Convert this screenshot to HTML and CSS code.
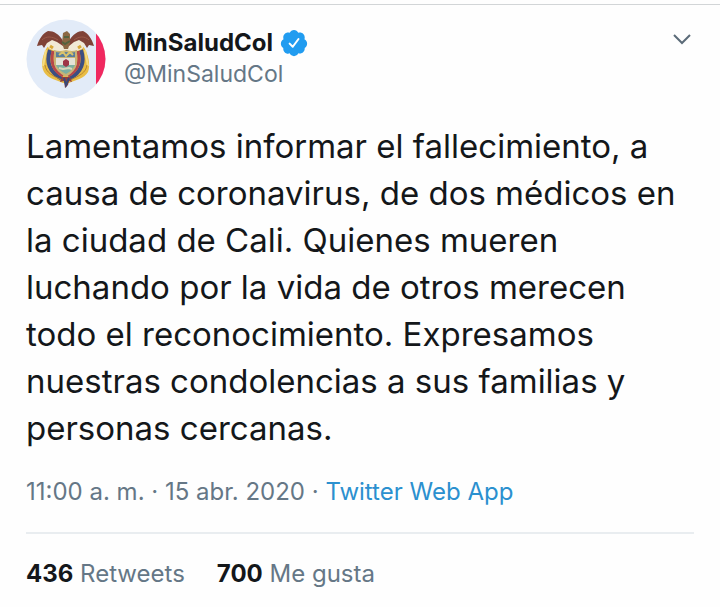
FILE: index.html
```html
<!DOCTYPE html>
<html lang="es">
<head>
    <meta charset="UTF-8">
    <meta name="viewport" content="width=device-width, initial-scale=1.0">
    <title>MinSaludCol en Twitter</title>
    <link rel="stylesheet" href="styles.css">
</head>
<body>
    <article class="tweet">
        <!-- Cabecera -->
        <header class="tweet-header">
            <svg class="avatar" viewBox="0 0 80 80" role="img" aria-label="Escudo de Colombia">
                <defs>
                    <clipPath id="avatar-clip"><circle cx="40" cy="40" r="39.5"/></clipPath>
                </defs>
                <g clip-path="url(#avatar-clip)">
                    <rect width="80" height="80" fill="#e2ebf8"/>
                    <rect x="70" width="10" height="80" fill="#f0285f"/>
                </g>
                <!-- banderas -->
                <path d="M22 27 C17 34 14 46 18 53 C22 60 31 61 37 64 L43 64 C49 61 58 60 62 53 C65 46 62 34 57 27 Z" fill="#e9bd45"/>
                <path d="M20 31 L17 47 M59 31 L62 47" stroke="#f5dc83" stroke-width="2"/>
                <path d="M24 31 C20 43 23 53 36 60 M55 31 C59 43 56 53 43 60" fill="none" stroke="#3c4f82" stroke-width="4"/>
                <path d="M27 32 C24 44 28 52 37 57 M52 32 C55 44 51 52 42 57" fill="none" stroke="#b6474a" stroke-width="3"/>
                <path d="M19 46 C20 54 27 57 36 61 M61 46 C60 54 53 57 44 61" fill="none" stroke="#b8862f" stroke-width="1"/>
                <!-- cóndor -->
                <path d="M36 23 L27 20 L19 25 L24 30 L32 33 L48 33 L56 30 L60 25 L53 20 L44 23 Z" fill="#f1ead6"/>
                <path d="M37 22 C33 15 28 12 22 12 C17 14 13 20 11 27 L16 26 L18 29 L21 24 L26 21 L31 23 L37 27 Z" fill="#7f4237"/>
                <path d="M43 22 C47 15 52 12 57 12 C62 14 66 20 68 27 L63 26 L61 29 L58 24 L53 21 L48 23 L43 27 Z" fill="#7f4237"/>
                <path d="M16 21 C20 17 26 17 32 21 M63 21 C59 17 53 17 48 21" fill="none" stroke="#9b5a49" stroke-width="1"/>
                <path d="M37 14 L41 12 L44 15 L44 24 L42 30 L38 30 L36 24 Z" fill="#8b6844"/>
                <path d="M36 23 L39 25 L44 22 M38 18 H43" fill="none" stroke="#53633f" stroke-width="2"/>
                <path d="M24 27 L27 29 M55 27 L52 29" stroke="#d8aa39" stroke-width="3"/>
                <!-- escudo -->
                <path d="M28 31 Q34 33 40 31 Q46 33 51 31 L51 45 Q49 53 40 58 Q30 53 28 45 Z" fill="#c7b376"/>
                <path d="M30 33 Q35 34 40 33 Q45 34 49 33 L49 38 H30 Z" fill="#587e9d"/>
                <path d="M33 36 L37 33 L40 37 L44 33 L47 36" fill="none" stroke="#dac36b" stroke-width="2"/>
                <path d="M30 39 H49 V46 H30 Z" fill="#e4e2d7"/>
                <path d="M30 46 H49 Q47 51 40 55 Q32 51 30 46 Z" fill="#7dafa1"/>
                <path d="M37 42 L40 40 L43 42 L43 46 L40 48 L37 46 Z" fill="#9e3447"/>
                <path d="M33 49 L37 50 L43 49 L46 50" fill="none" stroke="#d8d6bb" stroke-width="2"/>
                <!-- cinta -->
                <path d="M36 58 L34 63 L38 62 L39 69 L42 66 L43 62 L46 63 L44 58 Z" fill="#943f3d"/>
                <path d="M38 59 L40 66 L43 59" fill="none" stroke="#374a78" stroke-width="2"/>
            </svg>
            <div class="author">
                <div class="author-name">
                    <a href="#">MinSaludCol</a>
                    <svg class="verified" viewBox="0 0 24 24" role="img" aria-label="Cuenta verificada">
                        <path d="M22.5 12.5c0-1.58-.875-2.95-2.148-3.6.154-.435.238-.905.238-1.4 0-2.21-1.71-3.998-3.818-3.998-.47 0-.92.084-1.336.25C14.818 2.415 13.51 1.5 12 1.5s-2.816.917-3.437 2.25c-.415-.165-.866-.25-1.336-.25-2.11 0-3.818 1.79-3.818 4 0 .494.083.964.237 1.4-1.272.65-2.147 2.018-2.147 3.6 0 1.495.782 2.798 1.942 3.486-.02.17-.032.34-.032.514 0 2.21 1.708 4 3.818 4 .47 0 .92-.086 1.335-.25.62 1.334 1.926 2.25 3.437 2.25 1.512 0 2.818-.916 3.437-2.25.415.163.865.248 1.336.248 2.11 0 3.818-1.79 3.818-4 0-.174-.012-.344-.033-.513 1.158-.687 1.943-1.99 1.943-3.484z" fill="#219cf0"/>
                        <path d="M8.5 12.5 L11 15 L15.6 8.8" fill="none" stroke="#fff" stroke-width="1.6" stroke-linecap="round" stroke-linejoin="round"/>
                    </svg>
                </div>
                <a class="author-handle" href="#">@MinSaludCol</a>
            </div>
            <button class="more-button" type="button" aria-label="Más opciones">
                <svg viewBox="0 0 20 12"><path d="M2 2 L10 10 L18 2" fill="none" stroke="#5b6b78" stroke-width="2"/></svg>
            </button>
        </header>

        <!-- Texto del tweet -->
        <p class="tweet-text">Lamentamos informar el fallecimiento, a causa de coronavirus, de dos médicos en la ciudad de Cali. Quienes mueren luchando por la vida de otros merecen todo el reconocimiento. Expresamos nuestras condolencias a sus familias y personas cercanas.</p>

        <p class="tweet-meta">11:00 a. m. · 15 abr. 2020 · <a href="#">Twitter Web App</a></p>

        <!-- Contadores -->
        <footer class="tweet-stats">
            <a href="#"><strong>436</strong> Retweets</a>
            <a href="#"><strong>700</strong> Me gusta</a>
        </footer>
    </article>
</body>
</html>
```
FILE: styles.css
```css
* {
    box-sizing: border-box;
}

body {
    margin: 0;
    background: #fefefe;
    color: #14171a;
    font-family: Inter, Roboto, sans-serif;
}

a {
    color: inherit;
    text-decoration: none;
}

a:hover {
    text-decoration: underline;
}

.tweet {
    margin-top: 4px;
    padding: 14px 26px 0;
    border-top: 1px solid #d2d5d7;
}

/* Cabecera */
.tweet-header {
    display: flex;
    align-items: flex-start;
}

.avatar {
    width: 80px;
    height: 80px;
    flex: none;
}

.author {
    flex: 1;
    padding: 8px 0 0 18px;
}

.author-name {
    display: flex;
    align-items: center;
    gap: 6px;
    font-size: 24px;
    font-weight: 700;
    line-height: 32px;
}

.verified {
    width: 30px;
    height: 30px;
}

.author-handle {
    display: block;
    color: #657786;
    font-size: 23px;
    line-height: 30px;
}

.more-button {
    margin-top: 14px;
    padding: 0 2px;
    border: none;
    background: transparent;
    cursor: pointer;
}

.more-button svg {
    display: block;
    width: 20px;
    height: 12px;
}

/* Texto */
.tweet-text {
    margin: 24px 0 0;
    font-size: 33px;
    line-height: 47px;
}

.tweet-meta {
    margin: 24px 0 0;
    padding-bottom: 24px;
    border-bottom: 2px solid #e9edf0;
    color: #657786;
    font-size: 24px;
    line-height: 32px;
}

.tweet-meta a {
    color: #2b90cf;
}

/* Contadores */
.tweet-stats {
    display: flex;
    gap: 32px;
    padding-top: 24px;
    color: #657786;
    font-size: 24px;
    line-height: 32px;
}

.tweet-stats strong {
    color: #14171a;
}
```
